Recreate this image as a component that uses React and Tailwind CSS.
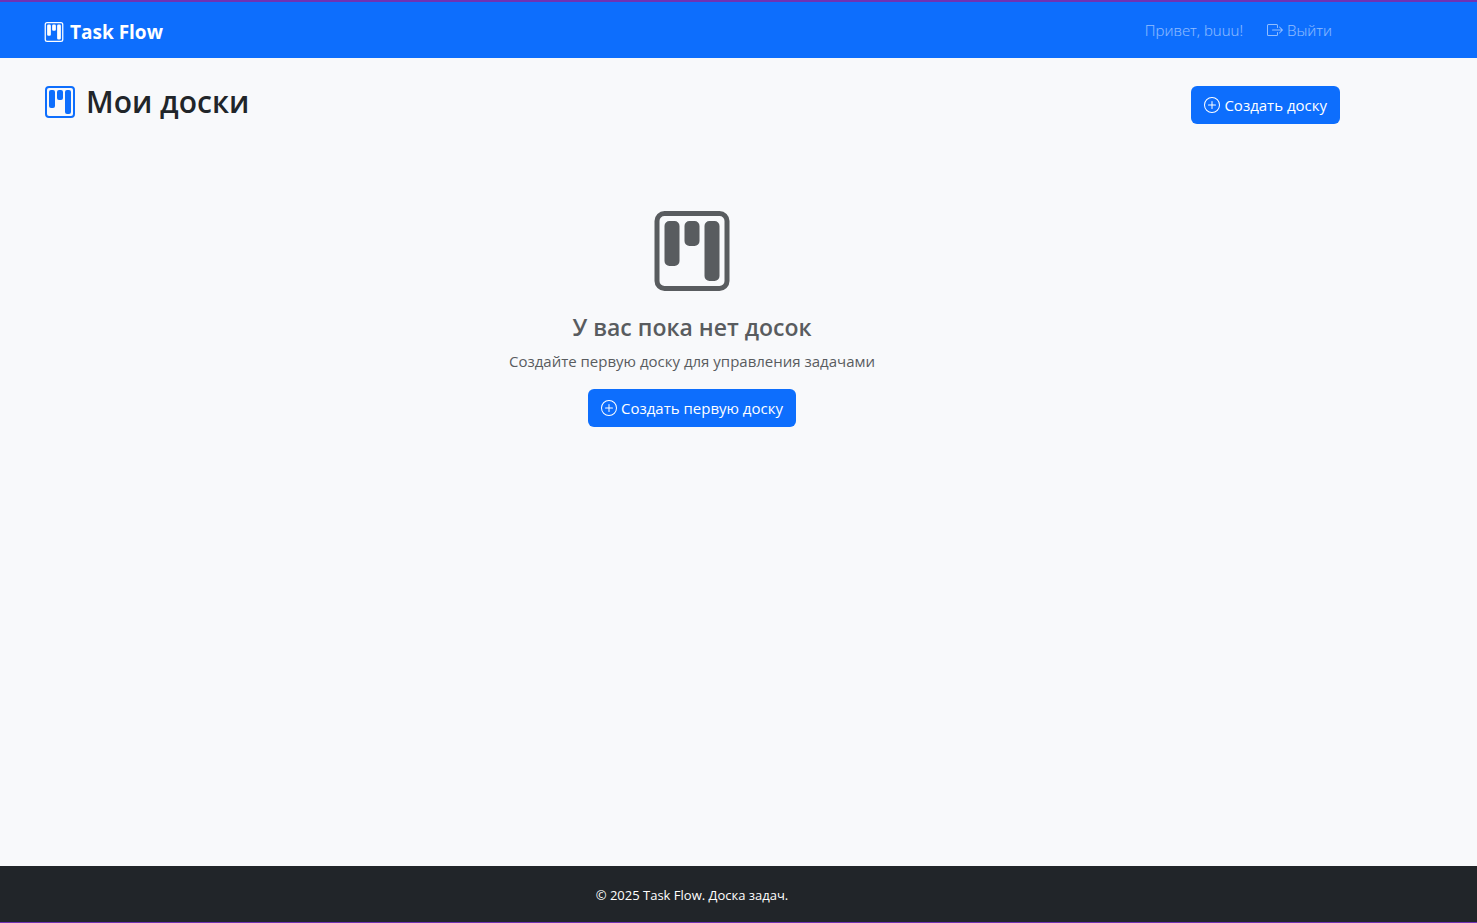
import { BsBoxArrowRight, BsKanban, BsPlusCircle } from "react-icons/bs";

function Container({ className = "", children }) {
  return <div className={`mx-auto w-full max-w-[1320px] px-3 ${className}`}>{children}</div>;
}

function CreateButton({ children }) {
  return (
    <button
      type="button"
      className="inline-flex h-[38px] items-center gap-1 rounded-md bg-[#0d6efd] px-[13px] text-[15px] leading-6 whitespace-nowrap text-white hover:bg-[#0b5ed7]"
    >
      <BsPlusCircle className="size-4" aria-hidden="true" />
      <span>{children}</span>
    </button>
  );
}

function Navbar() {
  return (
    <nav className="bg-[#0d6efd] pr-[93px]">
      <Container className="flex h-14 items-center justify-between">
        <a href="#" className="flex items-center gap-1.5 pt-1 text-[19px] leading-7 font-bold text-white">
          <BsKanban className="size-5" aria-hidden="true" />
          <span>Task Flow</span>
        </a>
        <div className="flex items-center gap-6 pr-2 text-[15px] leading-6 font-light text-white/55">
          <span>Привет, buuu!</span>
          <a href="#" className="flex items-center gap-1 hover:text-white/75">
            <BsBoxArrowRight className="size-4" aria-hidden="true" />
            <span>Выйти</span>
          </a>
        </div>
      </Container>
    </nav>
  );
}

export default function App() {
  return (
    <div className="flex min-h-screen flex-col border-t-2 border-b border-[#6f32b4] bg-[#f8f9fb] font-['Open_Sans','Noto_Sans',sans-serif] text-[#212529]">
      <Navbar />
      <main className="flex-1 pr-[93px]">
        <Container className="pt-6">
          <div className="flex items-start justify-between">
            <h1 className="flex items-center gap-2.5 text-[30px] leading-10 font-semibold">
              <BsKanban className="size-8 text-[#0d6efd]" aria-hidden="true" />
              <span>Мои доски</span>
            </h1>
            <div className="flex pt-1">
              <CreateButton>Создать доску</CreateButton>
            </div>
          </div>
          <section className="flex flex-col items-center pt-[87px] text-center text-[#595c5f]">
            <BsKanban className="size-20" aria-hidden="true" />
            <h2 className="mt-[22px] text-[23px] leading-7 font-semibold">У вас пока нет досок</h2>
            <p className="mt-2 mb-4 text-[15px] leading-6">
              Создайте первую доску для управления задачами
            </p>
            <CreateButton>Создать первую доску</CreateButton>
          </section>
        </Container>
      </main>
      <footer className="bg-[#212529] pr-[93px] text-white">
        <Container className="flex h-14 items-center justify-center pt-0.5">
          <small className="text-[13px] leading-5">© 2025 Task Flow. Доска задач.</small>
        </Container>
      </footer>
    </div>
  );
}
